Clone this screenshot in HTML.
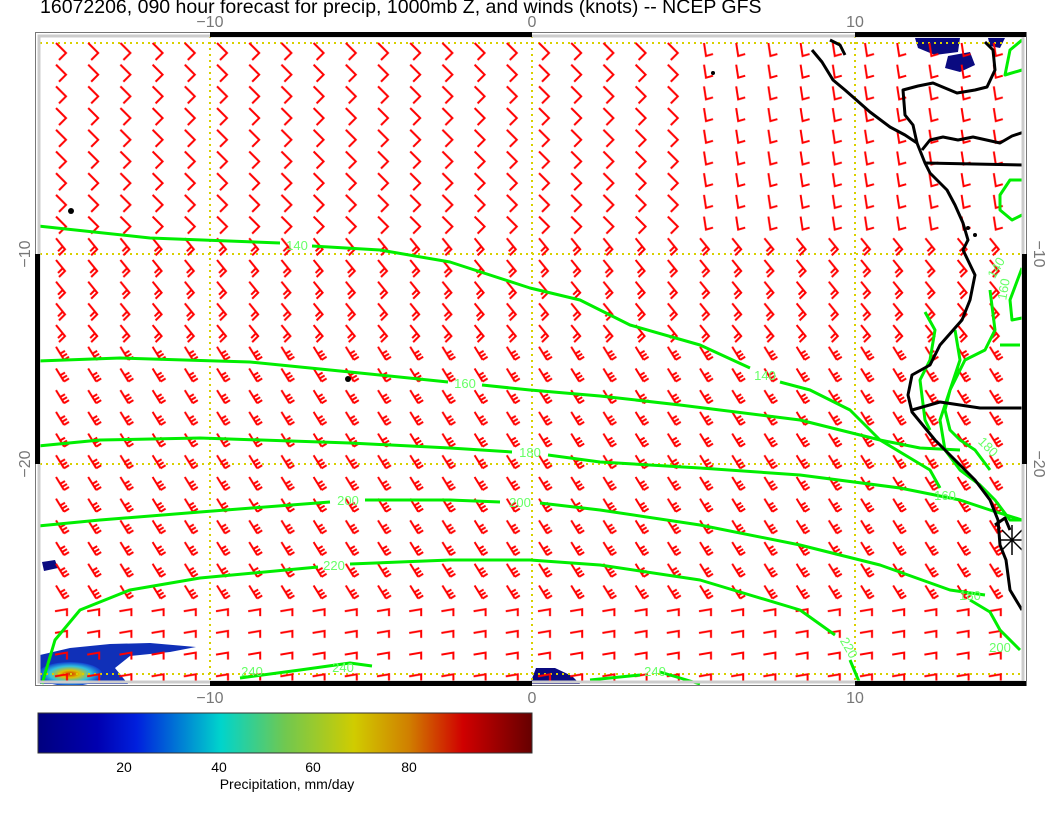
<!DOCTYPE html>
<html><head><meta charset="utf-8"><style>
html,body{margin:0;padding:0;background:#fff;width:1056px;height:816px;overflow:hidden}
svg{display:block}
text{font-family:"Liberation Sans",sans-serif}
</style></head><body>
<svg width="1056" height="816" viewBox="0 0 1056 816" xmlns="http://www.w3.org/2000/svg">
<defs>
<linearGradient id="jet" x1="0" x2="1" y1="0" y2="0">
<stop offset="0" stop-color="#00007f"/>
<stop offset="0.12" stop-color="#0000b0"/>
<stop offset="0.2" stop-color="#0020dd"/>
<stop offset="0.37" stop-color="#00d4cc"/>
<stop offset="0.5" stop-color="#70c850"/>
<stop offset="0.64" stop-color="#d0cc00"/>
<stop offset="0.75" stop-color="#d08000"/>
<stop offset="0.86" stop-color="#d00000"/>
<stop offset="1" stop-color="#660000"/>
</linearGradient>
<radialGradient id="hot" cx="0.5" cy="0.5" r="0.5">
<stop offset="0" stop-color="#d03000"/>
<stop offset="0.3" stop-color="#e0c000"/>
<stop offset="0.65" stop-color="#30c0e0"/>
<stop offset="1" stop-color="#1040d0"/>
</radialGradient>
<pattern id="pA" patternUnits="userSpaceOnUse" x="46" y="41" width="32.2" height="21.7">
<path d="M10,2 L20,12 L13,19" fill="none" stroke="#f00" stroke-width="2"/>
</pattern>
<pattern id="pB" patternUnits="userSpaceOnUse" x="46" y="41" width="32.2" height="21.7">
<path d="M10,2 L19,13 L13,19 M17,10 L12,15" fill="none" stroke="#f00" stroke-width="2"/>
</pattern>
<pattern id="pC" patternUnits="userSpaceOnUse" x="46" y="41" width="32.2" height="21.7">
<path d="M10,2 L18,15 M18,15 L23,12 M16,12 L21,9 M14,9 L19,6" fill="none" stroke="#f00" stroke-width="2"/>
</pattern>
<pattern id="pD" patternUnits="userSpaceOnUse" x="46" y="41" width="32.2" height="21.7">
<path d="M14,2 L16,15 L23,13" fill="none" stroke="#f00" stroke-width="2"/>
</pattern>
<pattern id="pE" patternUnits="userSpaceOnUse" x="46" y="41" width="32.2" height="21.7">
<path d="M9,6 L21,4 L21,11" fill="none" stroke="#f00" stroke-width="2"/>
</pattern>
</defs>
<text x="40" y="13" font-size="19.5" fill="#000">16072206, 090 hour forecast for precip, 1000mb Z, and winds (knots) -- NCEP GFS</text>
<g font-size="16" fill="#777" text-anchor="middle">
<text x="210" y="27">−10</text><text x="532" y="27">0</text><text x="855" y="27">10</text>
<text x="210" y="703">−10</text><text x="532" y="703">0</text><text x="855" y="703">10</text>
<text transform="translate(30,254) rotate(-90)">−10</text>
<text transform="translate(30,464) rotate(-90)">−20</text>
<text transform="translate(1034,254) rotate(90)">−10</text>
<text transform="translate(1034,464) rotate(90)">−20</text>
</g>
<!-- precip -->
<g>
<path d="M915,38 L960,38 L958,52 L935,55 L918,48Z" fill="#0a0a80"/>
<path d="M948,56 L970,52 L975,65 L960,72 L945,68Z" fill="#0a0a80"/>
<path d="M988,38 L1005,38 L1000,48 L990,46Z" fill="#0a0a80"/>
<path d="M42,562 L55,560 L58,568 L44,571Z" fill="#0a0a80"/>
<path d="M40,655 L70,648 L110,644 L150,643 L196,647 L170,652 L130,656 L115,668 L128,684 L40,684Z" fill="#1030b8"/>
<ellipse cx="70" cy="674" rx="32" ry="12" fill="url(#hot)"/>
<path d="M530,684 L536,668 L555,668 L572,676 L580,684Z" fill="#0a0a80"/>
</g>
<!-- grid -->
<g stroke="#d8d000" stroke-width="2" stroke-dasharray="2,4" fill="none">
<line x1="40" y1="43" x2="1022" y2="43"/><line x1="40" y1="254" x2="1022" y2="254"/>
<line x1="40" y1="464" x2="1022" y2="464"/><line x1="40" y1="674" x2="1022" y2="674"/>
<line x1="210" y1="36" x2="210" y2="682"/><line x1="532" y1="36" x2="532" y2="682"/><line x1="855" y1="36" x2="855" y2="682"/>
</g>
<!-- barbs -->
<rect x="46" y="41" width="644" height="195" fill="url(#pA)"/>
<rect x="690" y="41" width="322" height="195" fill="url(#pD)"/>
<rect x="46" y="236" width="966" height="108" fill="url(#pB)"/>
<rect x="46" y="344" width="966" height="260" fill="url(#pC)"/>
<rect x="46" y="604" width="966" height="80" fill="url(#pE)"/>
<!-- contours -->
<g stroke="#00ee00" stroke-width="3" fill="none" stroke-linejoin="round">
<polyline points="38,226 150,238 280,243"/>
<polyline points="312,246 380,250 450,262 530,288 580,300 630,325 700,345 750,368"/>
<polyline points="780,382 810,390 850,410 880,440 920,448 960,450"/>
<polyline points="38,361 120,358 250,362 350,372 448,382"/>
<polyline points="482,385 530,390 600,396 680,405 800,420 880,440 930,470 940,488"/>
<polyline points="38,446 100,440 200,438 350,443 450,448 512,452"/>
<polyline points="548,455 600,462 700,468 800,475 900,488 960,500 990,510 1022,520"/>
<polyline points="38,526 100,520 200,512 330,502"/>
<polyline points="365,500 450,500 500,502"/>
<polyline points="540,503 600,510 700,525 800,545 880,565 950,590 985,595"/>
<polyline points="42,684 55,640 80,610 130,590 200,578 318,567"/>
<polyline points="350,564 450,560 530,560 600,565 700,580 800,610 835,635"/>
<polyline points="850,660 860,684"/>
<polyline points="240,678 300,670 350,663 372,666"/>
<polyline points="590,680 640,675"/><polyline points="660,672 700,684"/>
<polyline points="970,600 990,612 1000,630 1020,650"/>
<polyline points="1022,40 1010,50 1005,75 1022,70"/>
<polyline points="1022,180 1010,180 1000,195 1000,210 1012,220 1022,215"/>
<polyline points="990,290 995,330 985,350 965,360 950,390 940,420 945,450 960,470 980,485 995,500 1010,520 1022,520"/>
<polyline points="1022,268 1010,300 1012,320 1022,318"/>
<polyline points="925,312 935,330 930,360 920,380 925,420 930,430"/>
<polyline points="955,330 960,360 950,390 945,410 950,430 960,440 975,450 990,470"/>
<polyline points="1000,345 1020,345"/>
</g>
<g font-size="13" fill="#66ff66" text-anchor="middle">
<text x="297" y="250">140</text><text x="465" y="388">160</text><text x="530" y="457">180</text>
<text x="348" y="505">200</text><text x="520" y="507">200</text><text x="334" y="570">220</text>
<text x="765" y="380">140</text><text x="945" y="500">160</text><text x="252" y="676">240</text>
<text x="343" y="672">240</text><text x="655" y="676">240</text>
<text x="970" y="600">180</text><text x="1000" y="652">200</text>
<text transform="translate(845,650) rotate(60)">220</text>
<text transform="translate(985,450) rotate(45)">180</text>
<text transform="translate(1000,270) rotate(-60)">140</text>
<text transform="translate(1008,290) rotate(-80)">160</text>
</g>
<!-- coast -->
<g stroke="#000" stroke-width="3" fill="none" stroke-linejoin="round">
<polyline points="812,50 822,62 833,80 845,90 853,97 870,112 890,127 905,135 917,143 925,163 930,173 947,190 955,205 963,223 968,240 963,250 975,275 970,300 962,320 940,345 930,365 912,375 908,395 912,412 935,440 955,460 975,480 990,500 998,520 1000,545 1006,560 1010,590 1022,610"/>
<polyline points="925,163 1024,165"/>
<polyline points="922,150 930,140 943,137 958,140 973,137 1000,143 1012,136 1024,132"/>
<polyline points="917,143 913,125 905,115 903,90 918,86 933,83 957,93 975,90 987,87 995,70 993,50 985,42"/>
<polyline points="912,410 940,402 980,408 1024,408"/>
<polyline points="830,40 840,45 845,55"/>
<polyline points="995,525 1005,518 1010,530"/>
</g>
<g stroke="#000" stroke-width="1.5"><line x1="1000" y1="540" x2="1024" y2="540"/><line x1="1012" y1="525" x2="1012" y2="555"/><line x1="1002" y1="530" x2="1022" y2="550"/><line x1="1022" y1="530" x2="1002" y2="550"/></g>
<g fill="#000"><circle cx="71" cy="211" r="3"/><circle cx="348" cy="379" r="3"/><circle cx="713" cy="73" r="2"/><circle cx="975" cy="235" r="2"/><circle cx="968" cy="228" r="2"/></g>
<!-- frame -->
<rect x="35.5" y="32.5" width="991" height="653" fill="none" stroke="#777" stroke-width="1"/>
<rect x="39" y="36" width="984" height="646" fill="none" stroke="#ccc" stroke-width="3"/>
<g fill="#000">
<rect x="210" y="32" width="322" height="5"/><rect x="855" y="32" width="171" height="5"/>
<rect x="210" y="681" width="322" height="5"/><rect x="855" y="681" width="171" height="5"/>
<rect x="35" y="254" width="5" height="210"/><rect x="1022" y="254" width="5" height="210"/>
</g>
<!-- colorbar -->
<rect x="38" y="713" width="494" height="40" fill="url(#jet)" stroke="#333" stroke-width="1"/>
<g font-size="14" fill="#000" text-anchor="middle">
<text x="124" y="772">20</text><text x="219" y="772">40</text><text x="313" y="772">60</text><text x="409" y="772">80</text>
<text x="287" y="789">Precipitation, mm/day</text>
</g>
</svg>
</body></html>
